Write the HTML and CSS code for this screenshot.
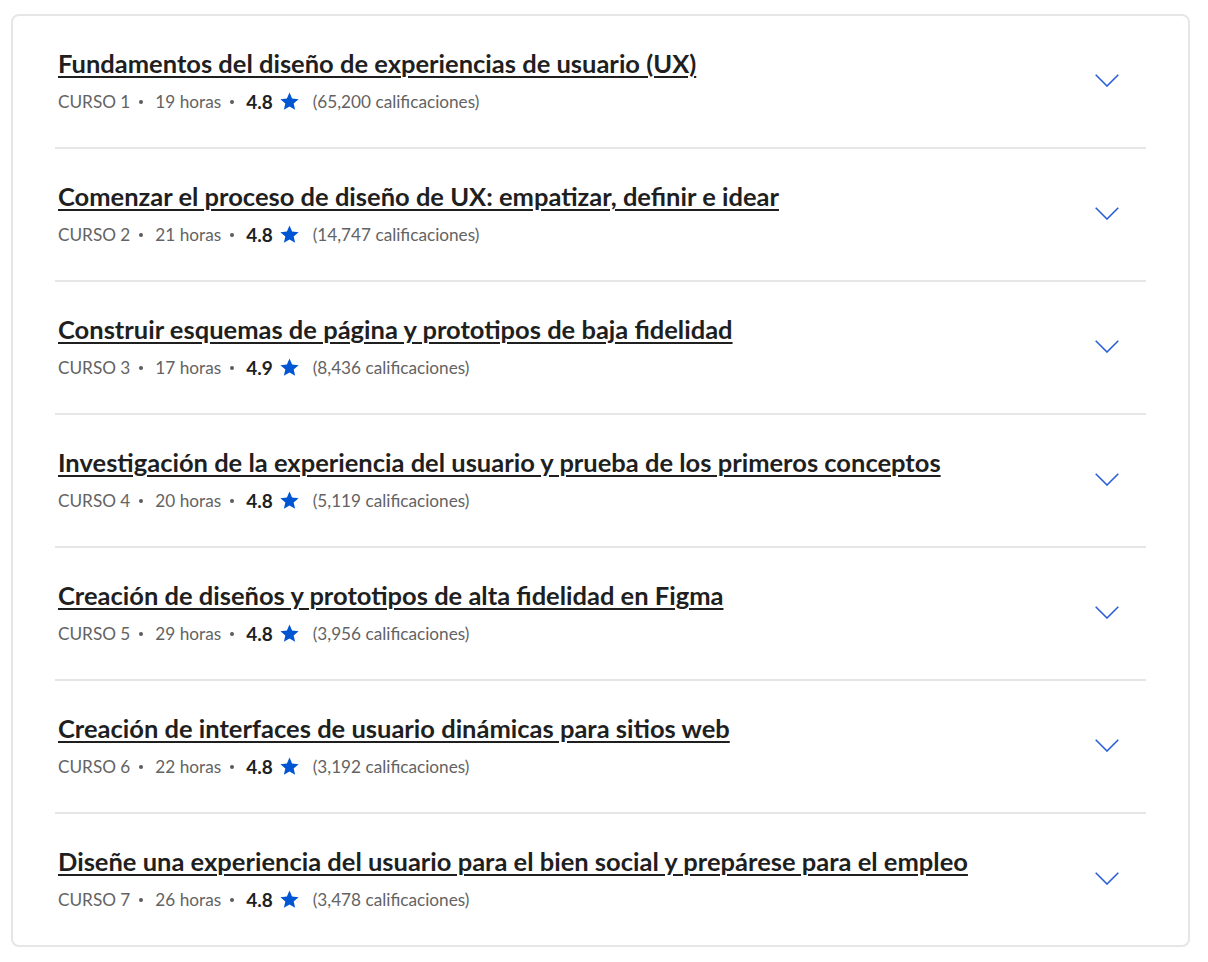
FILE: index.html
```html
<!DOCTYPE html>
<html lang="es">
<head>
<meta charset="utf-8">
<link rel="stylesheet" href="styles.css">
</head>
<body>
<div class="card">
  <div class="row">
    <div class="info">
      <a class="title" href="#">Fundamentos del diseño de experiencias de usuario (UX)</a>
      <div class="meta"><span>CURSO 1</span><span class="dot"></span><span>19 horas</span><span class="dot"></span><b>4.8</b><svg class="star" viewBox="0 0 24 24"><path d="M12 1.8l2.95 6.9 7.45.65-5.65 4.9 1.7 7.3L12 17.7l-6.45 3.85 1.7-7.3L1.6 9.35l7.45-.65z"/></svg><span class="count">(65,200 calificaciones)</span></div>
    </div>
    <svg class="chev" viewBox="0 0 24 13"><path d="M0.7 0.7L12 12L23.3 0.7"/></svg>
  </div>
  <div class="row">
    <div class="info">
      <a class="title" href="#">Comenzar el proceso de diseño de UX: empatizar, definir e idear</a>
      <div class="meta"><span>CURSO 2</span><span class="dot"></span><span>21 horas</span><span class="dot"></span><b>4.8</b><svg class="star" viewBox="0 0 24 24"><path d="M12 1.8l2.95 6.9 7.45.65-5.65 4.9 1.7 7.3L12 17.7l-6.45 3.85 1.7-7.3L1.6 9.35l7.45-.65z"/></svg><span class="count">(14,747 calificaciones)</span></div>
    </div>
    <svg class="chev" viewBox="0 0 24 13"><path d="M0.7 0.7L12 12L23.3 0.7"/></svg>
  </div>
  <div class="row">
    <div class="info">
      <a class="title" href="#">Construir esquemas de página y prototipos de baja fidelidad</a>
      <div class="meta"><span>CURSO 3</span><span class="dot"></span><span>17 horas</span><span class="dot"></span><b>4.9</b><svg class="star" viewBox="0 0 24 24"><path d="M12 1.8l2.95 6.9 7.45.65-5.65 4.9 1.7 7.3L12 17.7l-6.45 3.85 1.7-7.3L1.6 9.35l7.45-.65z"/></svg><span class="count">(8,436 calificaciones)</span></div>
    </div>
    <svg class="chev" viewBox="0 0 24 13"><path d="M0.7 0.7L12 12L23.3 0.7"/></svg>
  </div>
  <div class="row">
    <div class="info">
      <a class="title" href="#">Investigación de la experiencia del usuario y prueba de los primeros conceptos</a>
      <div class="meta"><span>CURSO 4</span><span class="dot"></span><span>20 horas</span><span class="dot"></span><b>4.8</b><svg class="star" viewBox="0 0 24 24"><path d="M12 1.8l2.95 6.9 7.45.65-5.65 4.9 1.7 7.3L12 17.7l-6.45 3.85 1.7-7.3L1.6 9.35l7.45-.65z"/></svg><span class="count">(5,119 calificaciones)</span></div>
    </div>
    <svg class="chev" viewBox="0 0 24 13"><path d="M0.7 0.7L12 12L23.3 0.7"/></svg>
  </div>
  <div class="row">
    <div class="info">
      <a class="title" href="#">Creación de diseños y prototipos de alta fidelidad en Figma</a>
      <div class="meta"><span>CURSO 5</span><span class="dot"></span><span>29 horas</span><span class="dot"></span><b>4.8</b><svg class="star" viewBox="0 0 24 24"><path d="M12 1.8l2.95 6.9 7.45.65-5.65 4.9 1.7 7.3L12 17.7l-6.45 3.85 1.7-7.3L1.6 9.35l7.45-.65z"/></svg><span class="count">(3,956 calificaciones)</span></div>
    </div>
    <svg class="chev" viewBox="0 0 24 13"><path d="M0.7 0.7L12 12L23.3 0.7"/></svg>
  </div>
  <div class="row">
    <div class="info">
      <a class="title" href="#">Creación de interfaces de usuario dinámicas para sitios web</a>
      <div class="meta"><span>CURSO 6</span><span class="dot"></span><span>22 horas</span><span class="dot"></span><b>4.8</b><svg class="star" viewBox="0 0 24 24"><path d="M12 1.8l2.95 6.9 7.45.65-5.65 4.9 1.7 7.3L12 17.7l-6.45 3.85 1.7-7.3L1.6 9.35l7.45-.65z"/></svg><span class="count">(3,192 calificaciones)</span></div>
    </div>
    <svg class="chev" viewBox="0 0 24 13"><path d="M0.7 0.7L12 12L23.3 0.7"/></svg>
  </div>
  <div class="row">
    <div class="info">
      <a class="title" href="#">Diseñe una experiencia del usuario para el bien social y prepárese para el empleo</a>
      <div class="meta"><span>CURSO 7</span><span class="dot"></span><span>26 horas</span><span class="dot"></span><b>4.8</b><svg class="star" viewBox="0 0 24 24"><path d="M12 1.8l2.95 6.9 7.45.65-5.65 4.9 1.7 7.3L12 17.7l-6.45 3.85 1.7-7.3L1.6 9.35l7.45-.65z"/></svg><span class="count">(3,478 calificaciones)</span></div>
    </div>
    <svg class="chev" viewBox="0 0 24 13"><path d="M0.7 0.7L12 12L23.3 0.7"/></svg>
  </div>
</div>
</body>
</html>
```
FILE: styles.css
```css
html, body {
  margin: 0;
  padding: 0;
  background: #ffffff;
}
body {
  padding: 14px 18px 0 11px;
  font-family: "Lato", "Liberation Sans", sans-serif;
}
.card {
  width: 1179px;
  border: 2px solid #e6e6e6;
  border-radius: 8px;
  padding: 0 42px;
  box-sizing: border-box;
}
.row {
  display: flex;
  align-items: center;
  justify-content: space-between;
  height: 133px;
  box-sizing: border-box;
  padding: 0 27px 0 3px;
  border-bottom: 2px solid #e6e6e6;
}
.row:last-child {
  border-bottom: none;
  height: 131px;
}
.info {
  display: flex;
  flex-direction: column;
  align-items: flex-start;
  gap: 11px;
  margin-bottom: 3px;
}
.title {
  font-size: 25.5px;
  line-height: 32px;
  font-weight: 700;
  color: #1f1f1f;
  text-decoration: underline;
  text-decoration-thickness: 2px;
  text-underline-offset: 3px;
}
.meta {
  display: flex;
  align-items: center;
  font-size: 17.2px;
  line-height: 24px;
  color: #636363;
}
.dot {
  width: 4px;
  height: 4px;
  border-radius: 50%;
  background: #5b5b5b;
  margin: 0 12px 0 9px;
}
.meta b {
  color: #1f1f1f;
  font-weight: 700;
  font-size: 19px;
}
.star {
  width: 21px;
  height: 21px;
  fill: #0056d2;
  margin: 0 13px 0 6px;
}
.chev {
  width: 24px;
  height: 13px;
  fill: none;
  stroke: #2a5fd8;
  stroke-width: 1.6;
  margin-top: -2px;
}
```
